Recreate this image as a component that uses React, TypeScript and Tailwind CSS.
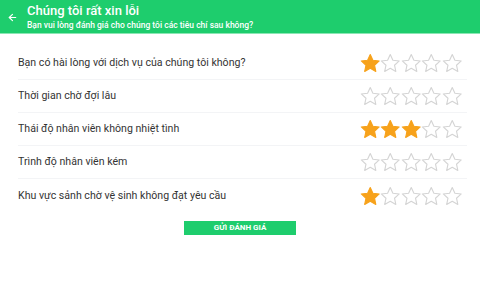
import { ArrowLeft } from 'lucide-react';

const criteria = [
  { label: 'Bạn có hài lòng với dịch vụ của chúng tôi không?', rating: 1 },
  { label: 'Thời gian chờ đợi lâu', rating: 0 },
  { label: 'Thái độ nhân viên không nhiệt tình', rating: 3 },
  { label: 'Trình độ nhân viên kém', rating: 0 },
  { label: 'Khu vực sảnh chờ vệ sinh không đạt yêu cầu', rating: 1 },
];

function Star({ filled }: { filled: boolean }) {
  return (
    <svg width="20.5" height="20" viewBox="0 0 24 23" className="flex-shrink-0">
      <path
        d="M12 1.5l3.1 6.8 7.4.8-5.5 5 1.5 7.3L12 17.7l-6.5 3.7 1.5-7.3-5.5-5 7.4-.8z"
        fill={filled ? '#f7a21b' : '#ffffff'}
        stroke={filled ? '#f7a21b' : '#d4d4d4'}
        strokeWidth="1.3"
        strokeLinejoin="round"
      />
    </svg>
  );
}

function RatingRow({ label, rating, last }: { label: string; rating: number; last?: boolean }) {
  return (
    <div className={`flex items-center h-[33px] ${last ? '' : 'border-b border-gray-100'}`}>
      <span className="flex-1 text-[10.6px] text-[#333333]">{label}</span>
      <div className="flex items-center mr-[5px]">
        {[1, 2, 3, 4, 5].map((i) => (
          <Star key={i} filled={i <= rating} />
        ))}
      </div>
    </div>
  );
}

export default function App() {
  return (
    <div className="w-[480px] h-[300px] bg-white font-['Roboto',sans-serif] overflow-hidden">
      {/* Header */}
      <header className="h-[34px] bg-[#1ecd6d] flex items-center border-b border-[#8be6b4]">
        <ArrowLeft size={11} strokeWidth={2.5} className="text-white ml-[7px] mr-[9px] mt-[1px]" />
        <div className="flex flex-col leading-none">
          <span className="text-[13px] text-white font-medium">Chúng tôi rất xin lỗi</span>
          <span className="text-[8.5px] text-white font-medium mt-[4px]">
            Bạn vui lòng đánh giá cho chúng tôi các tiêu chí sau không?
          </span>
        </div>
      </header>

      {/* Criteria */}
      <div className="flex flex-col pl-[18px] pr-[13px] mt-[13px]">
        {criteria.map((c, idx) => (
          <RatingRow key={c.label} label={c.label} rating={c.rating} last={idx === criteria.length - 1} />
        ))}
      </div>

      <div className="flex justify-center mt-[9px]">
        <button className="w-[112px] h-[14px] bg-[#1ecd6d] text-white text-[8px] font-bold leading-none">
          GỬI ĐÁNH GIÁ
        </button>
      </div>
    </div>
  );
}
